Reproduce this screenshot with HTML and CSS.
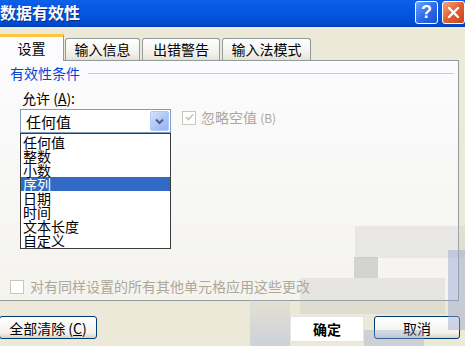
FILE: index.html
```html
<!DOCTYPE html>
<html lang="zh-CN">

<head>
    <meta charset="UTF-8">
    <title>数据有效性</title>
    <link rel="stylesheet" href="styles.css">
</head>

<body>
    <div class="titlebar">
        <span class="title">数据有效性</span>
        <div class="ctrls">
            <span class="ctrl help">?</span>
            <span class="ctrl close">
                <svg width="13" height="13" viewBox="0 0 13 13">
                    <path d="M2 2 L11 11 M11 2 L2 11" stroke="#fff" stroke-width="2.4" stroke-linecap="round" />
                </svg>
            </span>
        </div>
    </div>

    <div class="tabs">
        <div class="tab active">设置</div>
        <div class="tab t2">输入信息</div>
        <div class="tab t3">出错警告</div>
        <div class="tab t4">输入法模式</div>
    </div>

    <div class="panel">
        <div class="group-head">
            <span>有效性条件</span>
            <span class="rule"></span>
        </div>
        <div class="allow-label">允许 (<u>A</u>):</div>
        <div class="allow-row">
            <div class="combo-wrap">
                <div class="combo">
                    <span>任何值</span>
                    <span class="drop">
                        <svg width="9" height="7" viewBox="0 0 9 7">
                            <path d="M1 1.5 L4.5 5 L8 1.5" fill="none" stroke="#4D6185" stroke-width="2" />
                        </svg>
                    </span>
                </div>
                <ul class="list">
                    <li>任何值</li>
                    <li>整数</li>
                    <li>小数</li>
                    <li class="sel">序列</li>
                    <li>日期</li>
                    <li>时间</li>
                    <li>文本长度</li>
                    <li>自定义</li>
                </ul>
            </div>
            <div class="check ignore">
                <span class="box">
                    <svg width="11" height="11" viewBox="0 0 11 11">
                        <path d="M2 5 L4.5 7.5 L9 2.5" fill="none" stroke="#C4C2B4" stroke-width="1.6" />
                    </svg>
                </span>
                <span>忽略空值 <small>(B)</small></span>
            </div>
        </div>
        <div class="check apply">
            <span class="box"></span>
            <span>对有同样设置的所有其他单元格应用这些更改</span>
        </div>
    </div>

    <div class="buttons">
        <button class="btn clear">全部清除 (<u>C</u>)</button>
        <button class="btn ok">确定</button>
        <button class="btn cancel">取消</button>
    </div>

    <!-- blurred watermark over the lower right -->
    <div class="wm w1"></div>
    <div class="wm w2"></div>
    <div class="wm w3"></div>
    <div class="wm w4"></div>
    <div class="wm w5"></div>
    <div class="wm w6"></div>
</body>

</html>
```

FILE: styles.css
```css
* {
    box-sizing: border-box;
}

body {
    margin: 0;
    width: 465px;
    height: 346px;
    overflow: hidden;
    position: relative;
    background-color: #ECE9D8;
    font-family: "Noto Sans CJK SC", sans-serif;
    font-size: 14px;
    color: #000;
}

.titlebar {
    height: 27px;
    display: flex;
    justify-content: space-between;
    background: linear-gradient(#0B62E6 0%, #0A5CE8 15%, #0355E0 55%, #0049CC 90%, #003EB5 100%);
}

.title {
    color: #fff;
    font-weight: bold;
    font-size: 16px;
    line-height: 24px;
    text-shadow: 1px 1px #0A2A82;
}

.ctrls {
    display: flex;
    gap: 4px;
    padding-top: 1px;
}

.ctrl {
    width: 23px;
    height: 23px;
    border: 1px solid #fff;
    border-radius: 3px;
    display: flex;
    align-items: center;
    justify-content: center;
}

.help {
    background: linear-gradient(135deg, #6AA4FF, #2A68E6 55%, #1C52C9);
    color: #fff;
    font: bold 18px "Liberation Sans", sans-serif;
}

.close {
    background: linear-gradient(135deg, #F3A384, #E35F33 50%, #C9431D);
}

.tabs {
    height: 33px;
    display: flex;
    align-items: flex-end;
    position: relative;
    z-index: 2;
}

.tab {
    height: 22px;
    line-height: 21px;
    text-align: center;
    border: 1px solid #919B9C;
    border-bottom: none;
    border-radius: 3px 3px 0 0;
    background: linear-gradient(#FFFFFF, #F1F0EA 70%, #E4E1D6);
}

.tab.active {
    width: 64px;
    height: 27px;
    margin-bottom: -1px;
    border-left: none;
    border-top: 3px solid #FFC83C;
    border-radius: 0;
    background: #FCFCFE;
    line-height: 22px;
}

.t2 {
    width: 75px;
    margin-left: 1px;
}

.t3 {
    width: 78px;
    margin-left: 2px;
}

.t4 {
    width: 89px;
    margin-left: 2px;
}

.panel {
    width: 459px;
    height: 241px;
    border: 1px solid #919B9C;
    border-left: none;
    background: linear-gradient(#FCFCFE, #F4F3EE);
}

.group-head {
    display: flex;
    align-items: center;
    margin: 5px 4px 0 10px;
    line-height: 15px;
    color: #0046D5;
}

.rule {
    flex: 1;
    height: 1px;
    margin-left: 8px;
    background-color: #D0D0BF;
}

.allow-label {
    margin: 10px 0 0 22px;
    line-height: 15px;
}

.allow-row {
    display: flex;
    align-items: flex-start;
    margin: 3px 0 0 20px;
}

.combo-wrap {
    position: relative;
    width: 151px;
}

.combo {
    height: 24px;
    display: flex;
    align-items: center;
    padding-left: 5px;
    border: 1px solid #7F9DB9;
    background-color: #fff;
    font-size: 15px;
}

.drop {
    width: 19px;
    height: 20px;
    margin-left: auto;
    margin-right: 1px;
    display: flex;
    align-items: center;
    justify-content: center;
    border: 1px solid #B4C8F6;
    border-radius: 2px;
    background: linear-gradient(135deg, #D6E3FE, #A9C2F8 60%, #98B4F4);
}

.list {
    position: absolute;
    top: 24px;
    left: 0;
    width: 151px;
    height: 116px;
    margin: 0;
    padding: 1px 0 0;
    list-style: none;
    border: 1px solid #3C3C3C;
    background-color: #fff;
    z-index: 3;
}

.list li {
    height: 14px;
    line-height: 14px;
    padding-left: 2px;
}

.list .sel {
    background-color: #316AC5;
    color: #fff;
}

.check {
    display: flex;
    align-items: center;
    color: #ACA899;
    line-height: 15px;
}

.box {
    width: 14px;
    height: 14px;
    display: flex;
    align-items: center;
    justify-content: center;
    border: 1px solid #C9C7BA;
    background-color: #fff;
    margin-right: 5px;
}

.ignore {
    margin: 1px 0 0 11px;
}

.ignore small {
    font-size: 12px;
}

.apply {
    margin: 146px 0 0 10px;
}

.apply .box {
    margin-right: 6px;
}

.buttons {
    display: flex;
    margin-top: 15px;
    padding-right: 5px;
}

.btn {
    height: 23px;
    padding: 0;
    font-family: inherit;
    font-size: 14px;
    border: 1px solid #003C74;
    border-radius: 3px;
    background: linear-gradient(#FFFFFF, #F3F2EC 75%, #D8D3C6);
}

.clear {
    width: 98px;
    margin-left: -1px;
}

.ok {
    width: 74px;
    height: 26px;
    margin-left: auto;
    border: 1px solid #E4E4E4;
    border-radius: 0;
    background: #fff;
    font-weight: bold;
}

.cancel {
    width: 86px;
    margin-left: 10px;
}

.wm {
    position: absolute;
    pointer-events: none;
}

.w1 {
    left: 355px;
    top: 226px;
    width: 110px;
    height: 32px;
    background: rgba(190, 190, 190, 0.25);
}

.w2 {
    left: 354px;
    top: 257px;
    width: 24px;
    height: 21px;
    background: rgba(170, 170, 170, 0.45);
}

.w3 {
    left: 300px;
    top: 278px;
    width: 145px;
    height: 36px;
    background: rgba(185, 185, 185, 0.25);
}

.w4 {
    left: 250px;
    top: 300px;
    width: 40px;
    height: 46px;
    background: linear-gradient(rgba(200, 200, 200, 0.25), rgba(170, 182, 215, 0.45));
}

.w5 {
    left: 448px;
    top: 250px;
    width: 17px;
    height: 80px;
    background: rgba(150, 165, 210, 0.45);
}

.w6 {
    left: 364px;
    top: 330px;
    width: 60px;
    height: 16px;
    background: rgba(150, 165, 210, 0.35);
}
```
